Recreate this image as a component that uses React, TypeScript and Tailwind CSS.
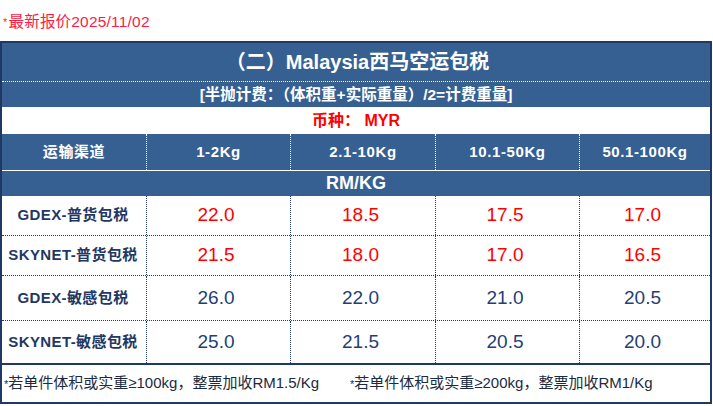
import React from 'react'

const font = { fontFamily: '"Liberation Sans", "Noto Sans CJK SC", sans-serif' }

const cols = ["1-2Kg", "2.1-10Kg", "10.1-50Kg", "50.1-100Kg"]

const rows = [
  { name: "GDEX-普货包税", prices: ["22.0", "18.5", "17.5", "17.0"], red: true, h: "h-[40px]" },
  { name: "SKYNET-普货包税", prices: ["21.5", "18.0", "17.0", "16.5"], red: true, h: "h-[40px]" },
  { name: "GDEX-敏感包税", prices: ["26.0", "22.0", "21.0", "20.5"], red: false, h: "h-[45px]" },
  { name: "SKYNET-敏感包税", prices: ["25.0", "21.5", "20.5", "20.0"], red: false, h: "h-[42px]" },
]

const grid = "grid grid-cols-[144px_144px_145px_144px_1fr]"

export default function App() {
  return (
    <div className="w-[713px] h-[406px] bg-white overflow-hidden" style={font}>
      <div className="h-[41px] flex items-center pl-[3px] pt-[3px] text-[15.5px] tracking-[0.2px] text-[#ff1a40]">
        <span className="text-[11px] mr-[1px]">*</span>最新报价2025/11/02
      </div>

      <div className="w-[712px] border-2 border-[#1f3864]">
        {/* title */}
        <div className="h-[39px] bg-[#366092] flex items-center justify-center pl-[3px] text-[20px] font-bold text-white border-b border-dotted border-white">
          （二）Malaysia西马空运包税
        </div>
        <div className="h-[25px] bg-[#366092] flex items-center justify-center text-[15.5px] font-bold text-white">
          [半抛计费：（体积重+实际重量）/2=计费重量]
        </div>
        <div className="h-[27px] flex items-center justify-center text-[16px] font-bold text-[#ff0000]">
          币种：&nbsp;MYR
        </div>

        {/* header */}
        <div className={`${grid} h-[37px] bg-[#366092] border-b border-white text-[15px] tracking-[0.6px] font-bold text-white`}>
          <div className="flex items-center justify-center">运输渠道</div>
          {cols.map((c) => (
            <div key={c} className="flex items-center justify-center border-l border-dotted border-white">
              {c}
            </div>
          ))}
        </div>
        <div className="h-[25px] bg-[#366092] flex items-center justify-center text-[18px] font-bold text-white">
          RM/KG
        </div>

        {/* data */}
        {rows.map((r, i) => (
          <div
            key={r.name}
            className={`${grid} ${r.h} ${i < rows.length - 1 ? "border-b border-dotted border-[#1f3864]" : ""}`}
          >
            <div className="flex items-center justify-center pr-[2px] text-[15px] tracking-[0.4px] font-bold text-[#1f3864]">
              {r.name}
            </div>
            {r.prices.map((p, j) => (
              <div
                key={j}
                className={`flex items-center justify-center pr-[5px] border-l border-dotted border-[#1f3864] text-[19px] ${
                  r.red ? "text-[#ff0000]" : "text-[#1f3f77]"
                }`}
              >
                {p}
              </div>
            ))}
          </div>
        ))}

        {/* footer */}
        <div className="h-[39px] border-t-2 border-[#1f3864] grid grid-cols-[348px_1fr] items-center text-[15px] text-[#1c2a3f]">
          <div className="pl-[2px]">
            <span className="text-[11px]">*</span>若单件体积或实重≥100kg，整票加收RM1.5/Kg
          </div>
          <div>
            <span className="text-[11px]">*</span>若单件体积或实重≥200kg，整票加收RM1/Kg
          </div>
        </div>
      </div>
    </div>
  )
}
